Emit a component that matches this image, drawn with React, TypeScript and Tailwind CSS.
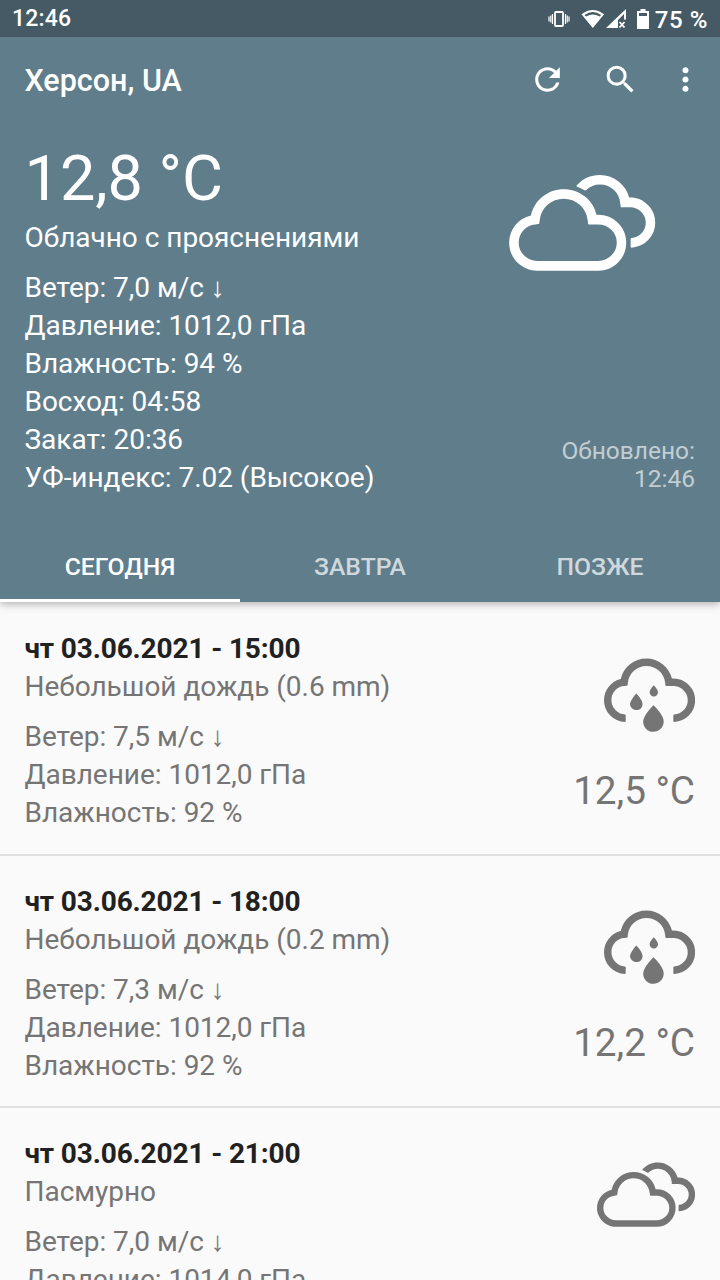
import type { ReactNode } from "react";
import { MdMoreVert, MdRefresh, MdSearch } from "react-icons/md";
import { WiCloudy, WiSprinkle } from "react-icons/wi";

type Forecast = {
  time: string;
  summary: string;
  wind: string;
  pressure: string;
  humidity: string;
  temp?: string;
  icon: "rain" | "cloudy";
};

const forecasts: Forecast[] = [
  { time: "чт 03.06.2021 - 15:00", summary: "Небольшой дождь (0.6 mm)", wind: "7,5", pressure: "1012,0", humidity: "92", temp: "12,5 °C", icon: "rain" },
  { time: "чт 03.06.2021 - 18:00", summary: "Небольшой дождь (0.2 mm)", wind: "7,3", pressure: "1012,0", humidity: "92", temp: "12,2 °C", icon: "rain" },
  { time: "чт 03.06.2021 - 21:00", summary: "Пасмурно", wind: "7,0", pressure: "1014,0", humidity: "92", icon: "cloudy" },
];

function StatusBar() {
  return (
    <div className="flex h-[37px] items-center justify-between bg-[#455a64] pl-[12px] pr-[12px] text-[23px] font-medium">
      <span className="pt-[2px] tracking-[0.2px]">12:46</span>
      <div className="flex items-center">
        <svg className="h-[18px] w-[22px]" viewBox="0 0 22 18" fill="none" stroke="currentColor">
          <rect x="7" y="2" width="8" height="14" rx="1" strokeWidth="1.8" />
          <path d="M4.5 4v10M17.5 4v10M1 6.5v5M21 6.5v5M2.8 5.5v7M19.2 5.5v7" strokeWidth="1.2" />
        </svg>
        <svg className="ml-[11px] h-[20px] w-[24px]" viewBox="0 0 24 20" fill="currentColor">
          <path d="M.5 5.3Q11.8 -3.300 23.1 5.3L11.8 19Z" />
          <path d="M3.5 5.9Q11.8 .2 20.1 5.9L18.6 7.6Q11.8 3.4 5 7.6Z" fill="#455a64" />
        </svg>
        <svg className="ml-[1px] h-[20px] w-[21px]" viewBox="0 0 21 20" fill="currentColor">
          <path d="M0 19L20 0V10.5H18V5L12 11V19Z" />
          <path d="M13.5 13L18.5 18.5M18.5 13L13.5 18.5" stroke="currentColor" strokeWidth="1.8" />
        </svg>
        <svg className="ml-[10px] h-[20px] w-[12px]" viewBox="0 0 12 20" fill="currentColor">
          <path d="M3.5 0H8.5V2H12V20H0V2H3.5Z" />
          <path d="M2 4H10V7H2Z" fill="#455a64" />
        </svg>
        <span className="ml-[6px] pt-[2px] text-[24px] tracking-[0.6px]">75 %</span>
      </div>
    </div>
  );
}

function Line({ children }: { children: ReactNode }) {
  return <div className="h-[38px] whitespace-nowrap leading-[38px]">{children}</div>;
}

function Current() {
  return (
    <section className="flex h-[407px] justify-between pl-[24.5px] pr-[25px]">
      <div className="pt-[24px] text-[28px] tracking-[-0.03px]">
        <div className="h-[78px] text-[63px] leading-[76px]">12,8 °C</div>
        <Line>Облачно с прояснениями</Line>
        <div className="mt-[12px]">
          <Line>Ветер: 7,0 м/с ↓</Line>
          <Line>Давление: 1012,0 гПа</Line>
          <Line>Влажность: 94 %</Line>
          <Line>Восход: 04:58</Line>
          <Line>Закат: 20:36</Line>
          <Line>УФ-индекс: 7.02 (Высокое)</Line>
        </div>
      </div>
      <div className="flex flex-col items-end justify-between pb-[31px] pt-[56px]">
        <WiCloudy viewBox="3.89 7 22.3 14.9" className="mr-[39.5px] h-[98px] w-[147px]" />
        <div className="text-right text-[24.5px] leading-[28px] text-[#c3ced3]">
          Обновлено:
          <br />
          12:46
        </div>
      </div>
    </section>
  );
}

function Tabs() {
  return (
    <nav className="grid h-[78px] grid-cols-3 text-center text-[24.7px] font-medium leading-[85px] text-[#cfd8dc]">
      <div className="h-[78px] border-b-[3px] border-white text-white">СЕГОДНЯ</div>
      <div className="h-[78px]">ЗАВТРА</div>
      <div className="h-[78px]">ПОЗЖЕ</div>
    </nav>
  );
}

function ForecastRow({ item }: { item: Forecast }) {
  return (
    <li className="flex h-[252.5px] shrink-0 justify-between border-b-2 border-[#e0e0e0] pl-[24.5px] pr-[25px] pt-[27px] text-[28px] tracking-[-0.03px] text-[#757575]">
      <div>
        <div className="h-[38px] font-bold leading-[38px] tracking-[-0.13px] text-[#212121]">{item.time}</div>
        <Line>{item.summary}</Line>
        <div className="mt-[12px]">
          <Line>Ветер: {item.wind} м/с ↓</Line>
          <Line>Давление: {item.pressure} гПа</Line>
          <Line>Влажность: {item.humidity} %</Line>
        </div>
      </div>
      <div className="flex flex-col items-end pt-[25.4px]">
        {item.icon === "rain" ? (
          <WiSprinkle viewBox="4.64 6.9 20.7 17.2" className="h-[76px] w-[91px]" />
        ) : (
          <WiCloudy viewBox="3.89 7 22.3 14.9" className="h-[66px] w-[98.5px]" />
        )}
        {item.temp && <div className="mt-[35px] h-[48px] text-[38.7px] leading-[48px]">{item.temp}</div>}
      </div>
    </li>
  );
}

export default function App() {
  return (
    <div className="flex h-[1280px] w-[720px] flex-col overflow-hidden bg-[#fafafa] font-['Roboto','Noto_Sans',sans-serif]">
      <header className="z-10 shrink-0 bg-[#607d8b] text-white shadow-[0_2px_8px_rgba(0,0,0,0.3)]">
        <StatusBar />
        <div className="flex h-[80px] items-center pl-[24.5px] pr-[16px] pt-[5px]">
          <h1 className="flex-1 pt-[3px] text-[30.5px] font-medium">Херсон, UA</h1>
          <MdRefresh className="size-[37px]" />
          <MdSearch className="ml-[36px] size-[37px]" />
          <MdMoreVert className="ml-[28px] size-[37px]" />
        </div>
        <Current />
        <Tabs />
      </header>
      <ul className="flex flex-col pt-[1.3px]">
        {forecasts.map((item) => (
          <ForecastRow key={item.time} item={item} />
        ))}
      </ul>
    </div>
  );
}
